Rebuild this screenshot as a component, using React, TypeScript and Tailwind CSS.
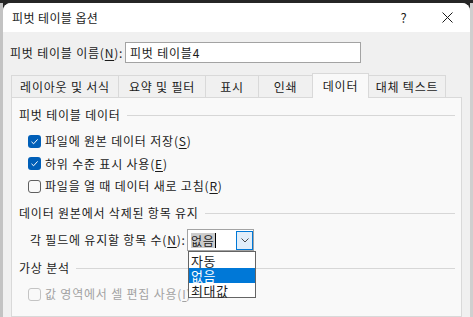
import React from "react";

type CheckState = "on" | "off" | "disabled";

function Check({ state }: { state: CheckState }) {
  if (state === "on") {
    return (
      <span className="flex h-[13px] w-[13px] shrink-0 items-center justify-center rounded-[3px] bg-[#005fb8]">
        <svg width="9" height="9" viewBox="0 0 9 9" fill="none">
          <path d="M1.5 4.8 L3.6 6.8 L7.6 2.4" stroke="white" strokeWidth="1" />
        </svg>
      </span>
    );
  }
  return (
    <span
      className={
        state === "disabled"
          ? "h-[13px] w-[13px] shrink-0 rounded-[3px] border border-[#c4c4c4] bg-[#f9f9f9]"
          : "h-[13px] w-[13px] shrink-0 rounded-[3px] border border-[#5f5f5f] bg-[#f9f9f9]"
      }
    />
  );
}

function Heading({ text, className }: { text: string; className?: string }) {
  return (
    <div className={"flex h-[16px] items-center pl-[7px] pr-[6px] " + (className ?? "")}>
      <span className="whitespace-nowrap">{text}</span>
      <span className="ml-[6px] h-px flex-1 bg-[#d7d7d7]" />
    </div>
  );
}

function CheckRow({
  state,
  label,
  accel,
  className,
}: {
  state: CheckState;
  label: string;
  accel: string;
  className?: string;
}) {
  return (
    <div className={"flex items-center pl-[16px] " + (className ?? "")}>
      <Check state={state} />
      <span className={"ml-[4px] whitespace-nowrap " + (state === "disabled" ? "text-[#a3a3a3]" : "")}>
        {label}(<span className="underline underline-offset-2">{accel}</span>)
      </span>
    </div>
  );
}

const tabs = [
  { label: "레이아웃 및 서식", w: "w-[107px]" },
  { label: "요약 및 필터", w: "w-[87px]" },
  { label: "표시", w: "w-[53px]" },
  { label: "인쇄", w: "w-[54px]" },
  { label: "데이터", w: "w-[57px]", active: true },
  { label: "대체 텍스트", w: "w-[77px]" },
];

export default function App() {
  return (
    <div
      className="flex h-[317px] w-[473px] flex-col overflow-hidden bg-[#262626] text-[12px] leading-[16px] tracking-[0.8px] text-[#1b1b1b]"
      style={{ fontFamily: '"Noto Sans CJK KR", "Noto Sans", sans-serif' }}
    >
      <div className="h-[3px] shrink-0" />
      <div className="flex min-h-0 flex-1">
        <div className="w-[3px] bg-[#c3c3c3]" />

        {/* dialog */}
        <div className="flex w-[467px] flex-col overflow-hidden rounded-t-[8px] bg-[#f0f0f0]">
          {/* title bar */}
          <div className="flex h-[29px] shrink-0 items-center bg-white pl-[9px]">
            <span className="tracking-[0.4px]">피벗 테이블 옵션</span>
            <div className="ml-auto flex h-full">
              <div className="flex w-[46px] items-center justify-center pl-[6px] text-[13px]">?</div>
              <div className="flex w-[46px] items-center justify-center">
                <svg width="11" height="11" viewBox="0 0 11 11">
                  <path d="M0.5 0.5 L10.5 10.5 M10.5 0.5 L0.5 10.5" stroke="#1b1b1b" strokeWidth="1" />
                </svg>
              </div>
            </div>
          </div>

          {/* body */}
          <div className="flex min-h-0 flex-1 flex-col pt-[10px]">
            <div className="flex items-center pl-[7px]">
              <span className="w-[115px] whitespace-nowrap">
                피벗 테이블 이름(<span className="underline underline-offset-2">N</span>):
              </span>
              <div className="flex h-[21px] w-[236px] items-center border border-[#a3a3a3] bg-white pl-[4px]">
                피벗 테이블4
              </div>
            </div>

            {/* tabs */}
            <div className="ml-[8px] mt-[10px] flex h-[24px] items-end">
              {tabs.map((t, i) =>
                t.active ? (
                  <div
                    key={t.label}
                    className={`relative z-10 -mb-px flex h-[25px] items-center justify-center whitespace-nowrap border-x border-t border-[#d9d9d9] bg-[#f9f9f9] ${t.w}`}
                  >
                    {t.label}
                  </div>
                ) : (
                  <div
                    key={t.label}
                    className={`flex h-[22px] items-center justify-center whitespace-nowrap border-t border-[#d9d9d9] bg-[#f0f0f0] ${t.w} ${
                      i === tabs.length - 1 ? "border-r" : "border-l"
                    }`}
                  >
                    {t.label}
                  </div>
                )
              )}
            </div>

            {/* panel */}
            <div className="ml-[8px] w-[451px] flex-1 border border-[#d9d9d9] bg-[#f9f9f9] pt-[9px]">
              <Heading text="피벗 테이블 데이터" />
              <CheckRow className="mt-[7px] h-[22px]" state="on" label="파일에 원본 데이터 저장" accel="S" />
              <CheckRow className="h-[23px]" state="on" label="하위 수준 표시 사용" accel="E" />
              <CheckRow className="h-[22px]" state="off" label="파일을 열 때 데이터 새로 고침" accel="R" />

              <Heading className="mt-[8px]" text="데이터 원본에서 삭제된 항목 유지" />
              <div className="relative z-20 mt-[8px] flex h-[22px] items-center pl-[18px]">
                <span className="w-[157px] whitespace-nowrap">
                  각 필드에 유지할 항목 수(<span className="underline underline-offset-2">N</span>):
                </span>
                <div className="relative flex h-[22px] w-[67px] items-center border border-[#a3a3a3] bg-white">
                  <span className="ml-[3px] bg-[#cccccc] leading-[15px]">없음</span>
                  <span className="h-[15px] w-px bg-black" />
                  <div className="ml-auto flex h-[19px] w-[17px] items-center justify-center border border-[#0078d7] bg-[#e1eefa]">
                    <svg width="8" height="5" viewBox="0 0 8 5" fill="none">
                      <path d="M0.5 0.5 L4 4 L7.5 0.5" stroke="#4a4a4a" strokeWidth="1" />
                    </svg>
                  </div>

                  {/* open list */}
                  <div className="absolute left-0 top-[21px] flex h-[47px] w-[68px] flex-col border border-[#646464] bg-white py-px text-[13px] tracking-[0.5px]">
                    <div className="h-[15px] pl-[2px] leading-[15px]">자동</div>
                    <div className="h-[15px] bg-[#0078d7] pl-[2px] leading-[15px] text-white">없음</div>
                    <div className="h-[15px] pl-[2px] leading-[15px]">최대값</div>
                  </div>
                </div>
              </div>

              <Heading className="mt-[9px]" text="가상 분석" />
              <CheckRow className="mt-[7px] h-[22px]" state="disabled" label="값 영역에서 셀 편집 사용" accel="I" />
            </div>
          </div>
        </div>

        <div className="flex-1 bg-[#cfcfcf]" />
      </div>
    </div>
  );
}
